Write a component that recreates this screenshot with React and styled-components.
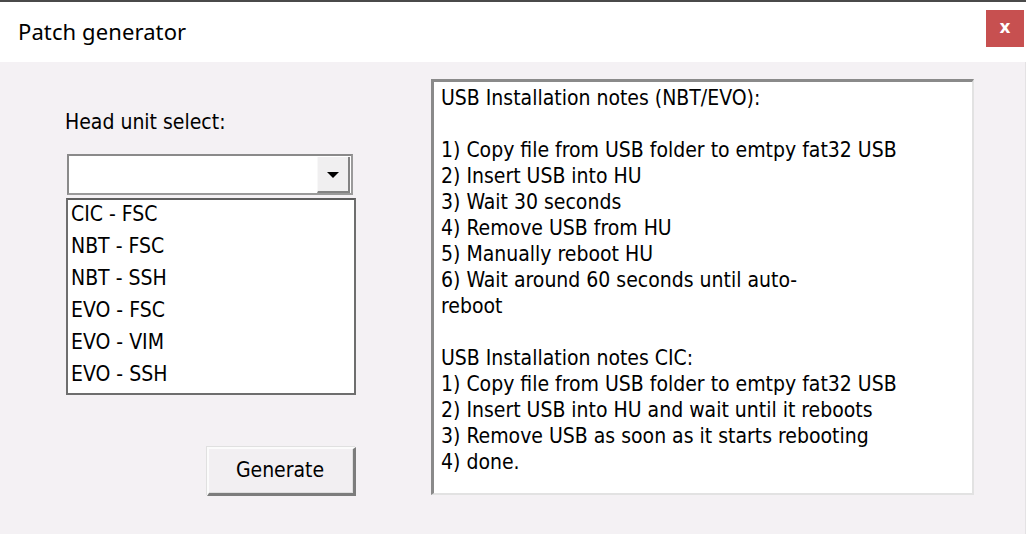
import React from "react";
import styled, { createGlobalStyle } from "styled-components";

const Global = createGlobalStyle`
  html, body { margin: 0; padding: 0; background: #ffffff; overflow: hidden; }
  * { box-sizing: border-box; }
`;

const FONT = `"DejaVu Sans Condensed", "DejaVu Sans", Tahoma, sans-serif`;

const Screen = styled.div`
  width: 1030px;
  height: 534px;
  position: relative;
  background: #ffffff;
`;

const TopEdge = styled.div`
  height: 2px;
  background: #4a4a4a;
  width: 1026px;
`;

const Window = styled.div`
  width: 1026px;
  display: flex;
  flex-direction: column;
  height: 534px;
`;

const TitleBar = styled.div`
  height: 60px;
  background: #ffffff;
  display: flex;
  align-items: center;
  justify-content: space-between;
  padding: 0 2px 0 18px;
`;

const Title = styled.div`
  font-family: "Noto Sans", "Open Sans", sans-serif;
  font-size: 22px;
  color: #000;
  letter-spacing: 0.1px;
  margin-top: -2px;
`;

const CloseButton = styled.div`
  width: 38px;
  height: 37px;
  background: #c75050;
  color: #fff;
  font-family: "DejaVu Sans", sans-serif;
  font-weight: bold;
  font-size: 17px;
  display: flex;
  align-items: center;
  justify-content: center;
  margin-top: -7px;
  padding-bottom: 3px;
`;

const Body = styled.div`
  flex: 1;
  background: #f4f1f4;
  display: flex;
  padding: 17px 0 0 65px;
  border-right: 1px solid #e4e2e4;
`;

const LeftCol = styled.div`
  width: 291px;
  display: flex;
  flex-direction: column;
  font-family: ${FONT};
  font-size: 21px;
  color: #000;
`;

const Label = styled.div`
  margin-top: 31px;
  height: 24px;
  line-height: 24px;
`;

const Combo = styled.div`
  margin-top: 20px;
  margin-left: 2px;
  width: 286px;
  height: 41px;
  background: #fff;
  border: 2px solid #8a8a8a;
  border-right-color: #9a9a9a;
  border-bottom-color: #9a9a9a;
  display: flex;
  justify-content: flex-end;
  padding: 1px 1px 0 0;
`;

const DropButton = styled.div`
  width: 33px;
  height: 36px;
  background: #f0eff0;
  border-left: 1px solid #f8f8f8;
  border-right: 2px solid #838383;
  border-bottom: 2px solid #838383;
  display: flex;
  align-items: center;
  justify-content: center;
`;

const Arrow = styled.div`
  width: 0;
  height: 0;
  border-left: 6px solid transparent;
  border-right: 6px solid transparent;
  border-top: 6px solid #000;
  margin-top: 2px;
`;

const List = styled.div`
  margin-top: 3px;
  margin-left: 1px;
  width: 290px;
  height: 197px;
  background: #fff;
  border: 2px solid #6e6e6e;
  border-top-color: #5e5e5e;
  padding: 0 0 0 3px;
`;

const Item = styled.div`
  height: 32px;
  line-height: 28px;
`;

const ButtonRow = styled.div`
  margin-top: 52px;
  display: flex;
  justify-content: flex-end;
`;

const Button = styled.div`
  width: 149px;
  height: 49px;
  background: #f2eff2;
  border-top: 2px solid #fbfbfb;
  border-left: 2px solid #fbfbfb;
  border-right: 3px solid #7c7c7c;
  border-bottom: 3px solid #7c7c7c;
  box-shadow: inset -1px -1px 0 #dedede, -1px -1px 0 #e0e0e0;
  display: flex;
  align-items: center;
  justify-content: center;
  padding-right: 2px;
  padding-bottom: 2px;
`;

const Notes = styled.div`
  margin-left: 75px;
  width: 543px;
  height: 416px;
  background: #fff;
  border-top: 3px solid #8a8a8a;
  border-left: 3px solid #8a8a8a;
  border-right: 2px solid #e2e2e2;
  border-bottom: 2px solid #e2e2e2;
  padding: 3px 0 0 7px;
  font-family: ${FONT};
  font-size: 21px;
  line-height: 26px;
  color: #000;
  white-space: pre;
`;

const Line = styled.div`
  height: 26px;
`;

const items = ["CIC - FSC", "NBT - FSC", "NBT - SSH", "EVO - FSC", "EVO - VIM", "EVO - SSH"];

const notes = [
  "USB Installation notes (NBT/EVO):",
  "",
  "1) Copy file from USB folder to emtpy fat32 USB",
  "2) Insert USB into HU",
  "3) Wait 30 seconds",
  "4) Remove USB from HU",
  "5) Manually reboot HU",
  "6) Wait around 60 seconds until auto-",
  "reboot",
  "",
  "USB Installation notes CIC:",
  "1) Copy file from USB folder to emtpy fat32 USB",
  "2) Insert USB into HU and wait until it reboots",
  "3) Remove USB as soon as it starts rebooting",
  "4) done.",
];

export default function App() {
  return (
    <>
      <Global />
      <Screen>
        <Window>
          <TopEdge />
          <TitleBar>
            <Title>Patch generator</Title>
            <CloseButton>x</CloseButton>
          </TitleBar>
          <Body>
            <LeftCol>
              <Label>Head unit select:</Label>
              <Combo>
                <DropButton>
                  <Arrow />
                </DropButton>
              </Combo>
              <List>
                {items.map((t) => (
                  <Item key={t}>{t}</Item>
                ))}
              </List>
              <ButtonRow>
                <Button>Generate</Button>
              </ButtonRow>
            </LeftCol>
            <Notes>
              {notes.map((t, i) => (
                <Line key={i}>{t}</Line>
              ))}
            </Notes>
          </Body>
        </Window>
      </Screen>
    </>
  );
}
